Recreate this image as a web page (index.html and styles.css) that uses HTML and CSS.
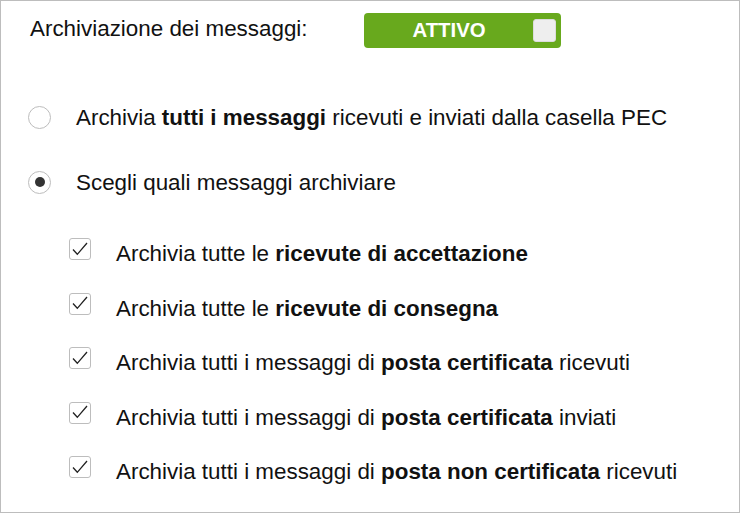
FILE: index.html
```html
<!DOCTYPE html>
<html lang="it">
<head>
<meta charset="utf-8">
<title>Archiviazione dei messaggi</title>
<link rel="stylesheet" href="styles.css">
</head>
<body>
<div class="panel">
  <div class="header">
    <span class="label">Archiviazione dei messaggi:</span>
    <div class="toggle">
      <span class="toggle-text">ATTIVO</span>
      <span class="knob"></span>
    </div>
  </div>

  <div class="radios">
    <div class="radio-row">
      <span class="radio"></span>
      <span class="text">Archivia <b>tutti i messaggi</b> ricevuti e inviati dalla casella PEC</span>
    </div>
    <div class="radio-row">
      <span class="radio checked"></span>
      <span class="text">Scegli quali messaggi archiviare</span>
    </div>
  </div>

  <div class="checks">
    <div class="check-row">
      <span class="box"><svg viewBox="0 0 22 22" width="22" height="22"><path d="M4 11.5 L8.3 16.3 L18 5" /></svg></span>
      <span class="text">Archivia tutte le <b>ricevute di accettazione</b></span>
    </div>
    <div class="check-row">
      <span class="box"><svg viewBox="0 0 22 22" width="22" height="22"><path d="M4 11.5 L8.3 16.3 L18 5" /></svg></span>
      <span class="text">Archivia tutte le <b>ricevute di consegna</b></span>
    </div>
    <div class="check-row">
      <span class="box"><svg viewBox="0 0 22 22" width="22" height="22"><path d="M4 11.5 L8.3 16.3 L18 5" /></svg></span>
      <span class="text">Archivia tutti i messaggi di <b>posta certificata</b> ricevuti</span>
    </div>
    <div class="check-row">
      <span class="box"><svg viewBox="0 0 22 22" width="22" height="22"><path d="M4 11.5 L8.3 16.3 L18 5" /></svg></span>
      <span class="text">Archivia tutti i messaggi di <b>posta certificata</b> inviati</span>
    </div>
    <div class="check-row">
      <span class="box"><svg viewBox="0 0 22 22" width="22" height="22"><path d="M4 11.5 L8.3 16.3 L18 5" /></svg></span>
      <span class="text">Archivia tutti i messaggi di <b>posta non certificata</b> ricevuti</span>
    </div>
  </div>
</div>
</body>
</html>
```

FILE: styles.css
```css
html, body {
  margin: 0;
  padding: 0;
  background: #ffffff;
}

body {
  font-family: "Liberation Sans", Arial, Helvetica, sans-serif;
  color: #111111;
}

.panel {
  width: 740px;
  height: 513px;
  box-sizing: border-box;
  border: 1px solid #bdbdbd;
  padding: 12px 0 0 27px;
  display: flex;
  flex-direction: column;
}

.header {
  display: flex;
  align-items: flex-start;
  gap: 56px;
}

.label {
  font-size: 22.4px;
  line-height: 22px;
  margin-top: 5px;
  margin-left: 2px;
  white-space: nowrap;
}

.toggle {
  width: 197px;
  height: 35px;
  box-sizing: border-box;
  background: #68a91d;
  border-radius: 4px;
  display: flex;
  align-items: center;
  padding-right: 5px;
}

.toggle-text {
  flex: 1;
  text-align: center;
  color: #ffffff;
  font-weight: bold;
  font-size: 20.4px;
  line-height: 35px;
  padding-left: 2px;
}

.knob {
  width: 23px;
  height: 23px;
  box-sizing: border-box;
  background: #eeeeee;
  border: 1px solid #dcdcdc;
  border-radius: 3px;
}

.radios {
  display: flex;
  flex-direction: column;
  gap: 25px;
  margin-top: 49px;
}

.radio-row {
  display: flex;
  align-items: center;
  height: 40px;
}

.radio {
  width: 23px;
  height: 23px;
  box-sizing: border-box;
  border: 1.5px solid #bdbdbd;
  border-radius: 50%;
  margin-right: 25px;
  display: flex;
  align-items: center;
  justify-content: center;
  flex-shrink: 0;
}

.radio.checked::after {
  content: "";
  width: 10px;
  height: 10px;
  border-radius: 50%;
  background: #333333;
}

.text {
  font-size: 22.4px;
  line-height: 30px;
  white-space: nowrap;
}

.radio-row .text {
  margin-top: 2px;
}

.checks {
  display: flex;
  flex-direction: column;
  gap: 19.5px;
  margin-top: 32px;
  margin-left: 41px;
}

.check-row {
  display: flex;
  align-items: flex-start;
  height: 35px;
}

.box {
  width: 22px;
  height: 22px;
  box-sizing: border-box;
  border: 1.5px solid #bdbdbd;
  border-radius: 3px;
  margin-top: 4px;
  margin-right: 25px;
  flex-shrink: 0;
  position: relative;
}

.box svg {
  position: absolute;
  left: -1.5px;
  top: -1.5px;
}

.box path {
  fill: none;
  stroke: #222222;
  stroke-width: 1.3;
}

.check-row .text {
  margin-top: 5px;
}
```
